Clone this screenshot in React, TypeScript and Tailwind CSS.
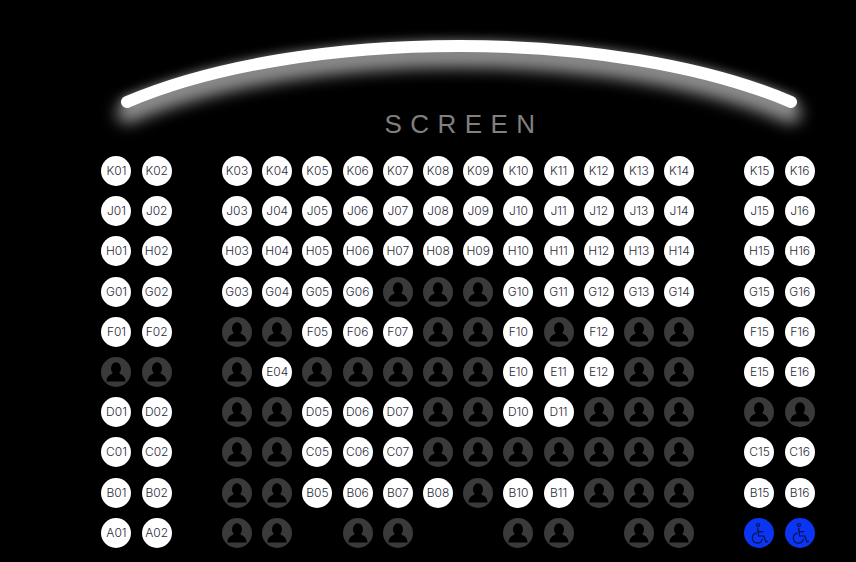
const rows: [string, string][] = [
  ["K", "wwwwwwwwwwwwwwww"],
  ["J", "wwwwwwwwwwwwwwww"],
  ["H", "wwwwwwwwwwwwwwww"],
  ["G", "wwwwwwdddwwwwwww"],
  ["F", "wwddwwwddwdwddww"],
  ["E", "dddwdddddwwwddww"],
  ["D", "wwddwwwddwwddddd"],
  ["C", "wwddwwwdddddddww"],
  ["B", "wwddwwwwdwwdddww"],
  ["A", "wwdd.dd..dd.ddbb"],
];

const ARC = "M127 102 C302 27.3 616 27.3 791 102";

function Person() {
  return (
    <svg width="24" height="24" viewBox="0 0 24 24" fill="#000">
      <ellipse cx="12" cy="8.2" rx="5" ry="6" />
      <path d="M8.5 13 C7.5 15 2.5 15 2.5 21.5 L21.5 21.5 C21.5 15 16.5 15 15.5 13 Z" />
    </svg>
  );
}

function Wheelchair() {
  return (
    <svg width="24" height="24" viewBox="0 0 24 24" fill="none" stroke="#07134a" strokeWidth="1.2" strokeLinecap="round" strokeLinejoin="round">
      <circle cx="11" cy="4" r="1.5" />
      <path d="M10.8 7 L11.6 15 L16.8 15 L18.8 20.8 L20.4 20.4" />
      <path d="M11.2 10.6 L15.8 10.6" />
      <path d="M9.4 12.2 A5 5 0 1 0 15.2 18.4" />
    </svg>
  );
}

function Seat({ row, n, kind }: { row: string; n: number; kind: string }) {
  if (kind === ".") return <div />;
  if (kind === "w")
    return (
      <div className="w-[30px] h-[30px] rounded-full bg-white flex items-center justify-center text-[12px] font-light text-[#2a2a3a] [font-family:Inter,sans-serif]">
        {row}
        {String(n).padStart(2, "0")}
      </div>
    );
  if (kind === "d")
    return (
      <div className="w-[30px] h-[30px] rounded-full bg-[#3a3a3a] flex items-center justify-center">
        <Person />
      </div>
    );
  return (
    <div className="w-[30px] h-[30px] rounded-full bg-[#0b35f2] flex items-center justify-center">
      <Wheelchair />
    </div>
  );
}

export default function App() {
  return (
    <div className="w-[856px] h-[562px] bg-black overflow-hidden">
      <svg width="856" height="120" viewBox="0 0 856 120" className="block overflow-visible">
        <defs>
          <filter id="glow" x="-10%" y="-100%" width="120%" height="320%">
            <feGaussianBlur stdDeviation="8" />
          </filter>
          <filter id="halo" x="-10%" y="-100%" width="120%" height="320%">
            <feGaussianBlur stdDeviation="4" />
          </filter>
        </defs>
        <path d={ARC} transform="translate(0 11)" fill="none" stroke="#ffffff" strokeOpacity="0.6" strokeWidth="20" strokeLinecap="round" filter="url(#glow)" />
        <path d={ARC} fill="none" stroke="#ffffff" strokeOpacity="0.25" strokeWidth="14" strokeLinecap="round" filter="url(#halo)" />
        <path d={ARC} fill="none" stroke="#ffffff" strokeWidth="12" strokeLinecap="round" />
      </svg>
      <div className="h-[31px] text-center text-[#808080] text-[26px] leading-[8px] pl-[72px] tracking-[8.4px] [font-family:'Liberation_Sans',sans-serif]">
        SCREEN
      </div>
      <div className="ml-[96.4px] grid grid-cols-[repeat(18,40.2px)] auto-rows-[40.2px] place-items-center">
        {rows.flatMap(([row, s]) => {
          const cells = [];
          for (let i = 0; i < 16; i++) {
            if (i === 2 || i === 14) cells.push(<div key={row + "g" + i} />);
            cells.push(<Seat key={row + i} row={row} n={i + 1} kind={s[i]} />);
          }
          return cells;
        })}
      </div>
    </div>
  );
}
